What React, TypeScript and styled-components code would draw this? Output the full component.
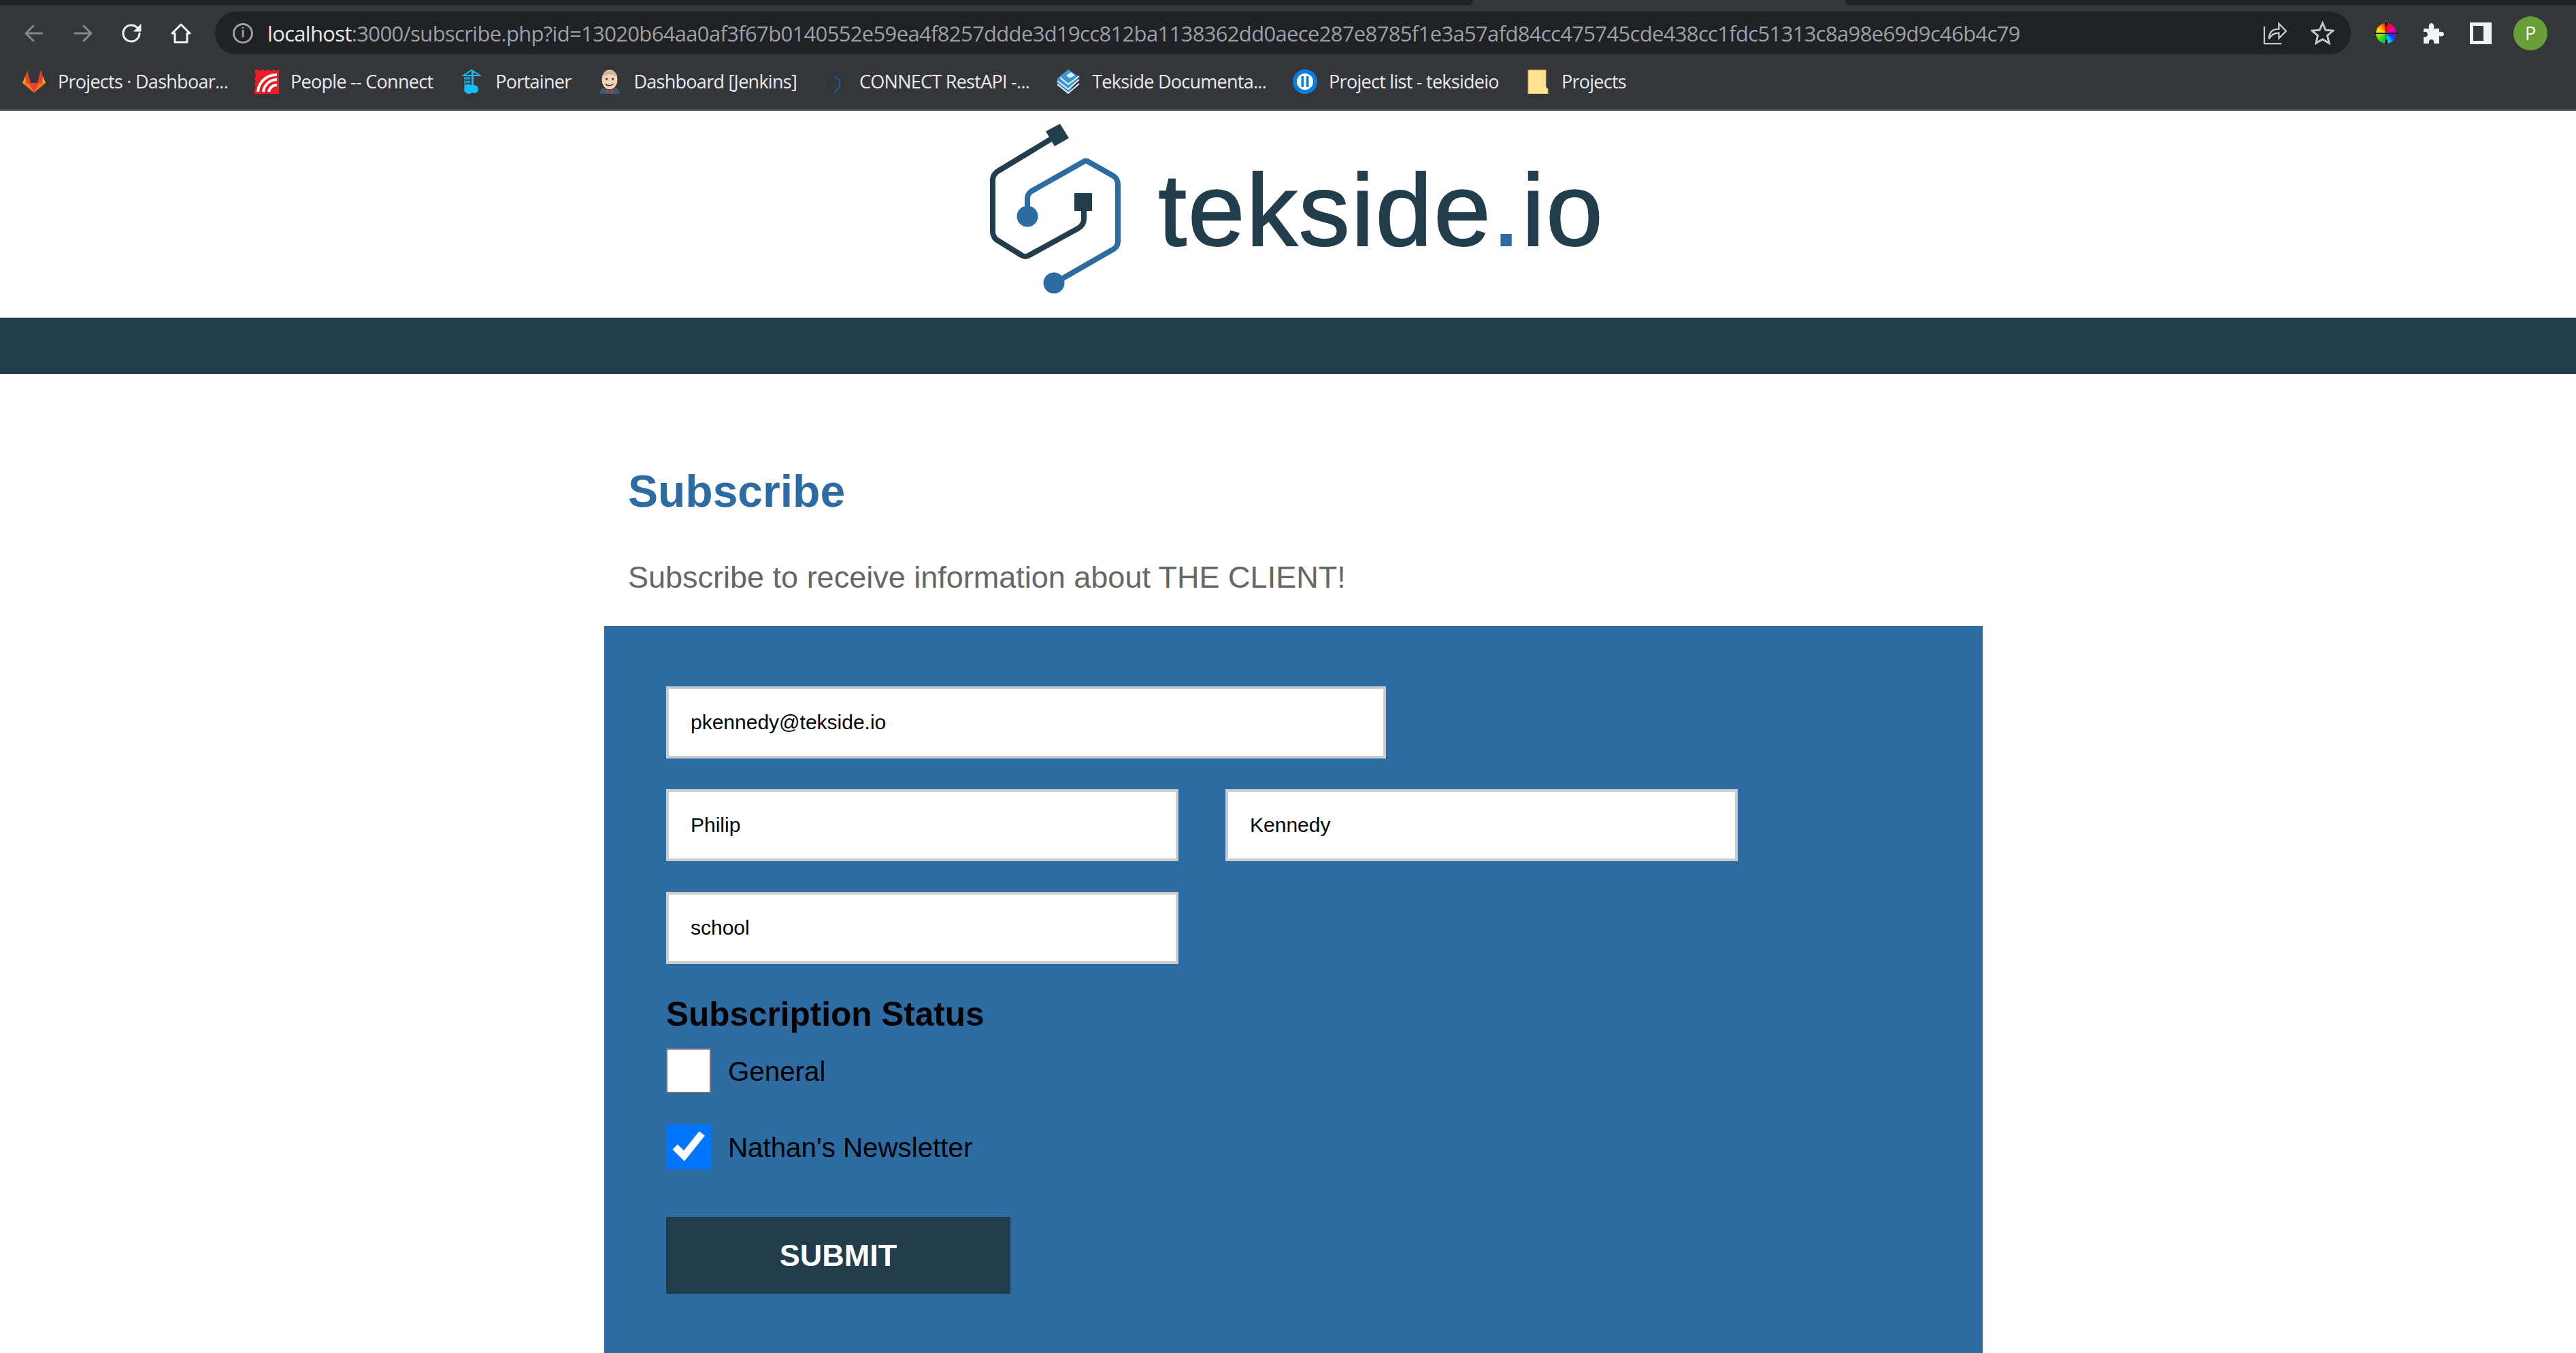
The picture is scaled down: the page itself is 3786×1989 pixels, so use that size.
import React from "react";
import styled, { createGlobalStyle } from "styled-components";

const GlobalStyle = createGlobalStyle`
  html, body, #root {
    margin: 0;
    height: 100%;
    overflow: hidden;
    background: #ffffff;
  }
  * {
    box-sizing: border-box;
  }
`;

const URL_HOST = "localhost";
const URL_REST =
  ":3000/subscribe.php?id=13020b64aa0af3f67b0140552e59ea4f8257ddde3d19cc812ba1138362dd0aece287e8785f1e3a57afd84cc475745cde438cc1fdc51313c8a98e69d9c46b4c79";

// Small browser icons, drawn on a 30x30 box
const NavIcon: React.FC<{ color: string; children: React.ReactNode }> = ({ color, children }) => (
  <IconSvg viewBox="0 0 30 30" fill="none" stroke={color} strokeWidth={3} strokeLinecap="round" strokeLinejoin="round">
    {children}
  </IconSvg>
);

const GitlabIcon = () => (
  <BookmarkSvg viewBox="0 0 36 36">
    <polygon points="18,34 1,20 5,10 13,20 23,20 31,10 35,20" fill="#fca326" />
    <polygon points="18,34 10,20 26,20" fill="#e24329" />
    <polygon points="5,10 8,1 13,20 6,20" fill="#e24329" />
    <polygon points="31,10 28,1 23,20 30,20" fill="#e24329" />
    <polygon points="18,34 1,20 10,20" fill="#fc6d26" />
    <polygon points="18,34 35,20 26,20" fill="#fc6d26" />
  </BookmarkSvg>
);

const ConnectIcon = () => (
  <BookmarkSvg viewBox="0 0 36 36">
    <path d="M20 3 L8 14 V24 L15 30" fill="none" stroke="#1c3a4d" strokeWidth={2} />
    <path d="M17 10 L24 16 V26 L16 34" fill="none" stroke="#1f5f94" strokeWidth={2} />
  </BookmarkSvg>
);

const PeopleIcon = () => (
  <BookmarkSvg viewBox="0 0 36 36">
    <path d="M0 2 L4 0 L8 2 L12 0 L16 2 L20 0 L24 2 L28 0 L32 2 L36 0 V36 H0 V30 L2 26 L0 22 L2 18 L0 14 L2 10 Z" fill="#ed1c24" />
    <path d="M5 33 A27 27 0 0 1 33 8" fill="none" stroke="#ffffff" strokeWidth={4} />
    <path d="M13 33 A20 20 0 0 1 33 15" fill="none" stroke="#ffffff" strokeWidth={4} />
    <path d="M21 33 A12 12 0 0 1 33 23" fill="none" stroke="#ffffff" strokeWidth={4} />
  </BookmarkSvg>
);

const PortainerIcon = () => (
  <BookmarkSvg viewBox="0 0 36 36">
    <path d="M6 9 L18 1 L30 9 Z" fill="none" stroke="#13bef9" strokeWidth={2} />
    <rect x="18" y="1" width="3" height="26" fill="#13bef9" />
    <rect x="7" y="11" width="9" height="4" fill="#1a8fc4" />
    <rect x="7" y="16.5" width="9" height="4" fill="#1a8fc4" />
    <rect x="7" y="22" width="9" height="4" fill="#1a8fc4" />
    <circle cx="14" cy="29" r="7" fill="#13bef9" />
    <circle cx="22" cy="29" r="6" fill="#13bef9" />
  </BookmarkSvg>
);

const JenkinsIcon = () => (
  <BookmarkSvg viewBox="0 0 36 36">
    <path d="M3 36 C4 28 9 26 18 26 C27 26 32 28 33 36 Z" fill="#3d5a6e" />
    <ellipse cx="18" cy="15" rx="12" ry="15" fill="#f0d6b7" stroke="#49302a" strokeWidth={1} />
    <path d="M7 12 C8 -1 28 -2 29 11 C23 6 13 6 7 12 Z" fill="#cdb49a" />
    <circle cx="13.5" cy="14" r="1.5" fill="#231f20" />
    <circle cx="22.5" cy="14" r="1.5" fill="#231f20" />
    <path d="M12 22 Q18 26 24 21" fill="none" stroke="#49302a" strokeWidth={1.6} />
    <path d="M13 29 L18 32 L23 29 L23 35 L18 32 L13 35 Z" fill="#d33833" />
  </BookmarkSvg>
);

const DocsIcon = () => (
  <BookmarkSvg viewBox="0 0 36 36">
    <polygon points="18,0 34,11 18,36 2,22 2,13" fill="#3d95d0" />
    <polygon points="22,4 28,9 20,13 15,9" fill="#d9edf8" />
    <path d="M2 17 L18 29 L34 15 M2 22 L18 35 L34 21 M6 12 L18 22 L34 10" fill="none" stroke="#e8f3fa" strokeWidth={1.8} />
  </BookmarkSvg>
);

const ProjectListIcon = () => (
  <BookmarkSvg viewBox="0 0 36 36">
    <circle cx="18" cy="18" r="18" fill="#0b7ee0" />
    <circle cx="18" cy="18" r="12" fill="#ffffff" />
    <rect x="12.5" y="10" width="3.6" height="16" fill="#0b7ee0" />
    <rect x="19.9" y="10" width="3.6" height="16" fill="#0b7ee0" />
  </BookmarkSvg>
);

const FolderIcon = () => (
  <BookmarkSvg viewBox="0 0 36 36">
    <path d="M4 1 H30 V26 L33 29 V36 H4 Z" fill="#fde293" stroke="#dcb65a" strokeWidth={1} />
  </BookmarkSvg>
);

const bookmarks: { label: string; icon: React.ReactNode }[] = [
  { label: "Projects · Dashboar...", icon: <GitlabIcon /> },
  { label: "People -- Connect", icon: <PeopleIcon /> },
  { label: "Portainer", icon: <PortainerIcon /> },
  { label: "Dashboard [Jenkins]", icon: <JenkinsIcon /> },
  { label: "CONNECT RestAPI -...", icon: <ConnectIcon /> },
  { label: "Tekside Documenta...", icon: <DocsIcon /> },
  { label: "Project list - teksideio", icon: <ProjectListIcon /> },
  { label: "Projects", icon: <FolderIcon /> },
];

const LogoMark = () => (
  <LogoSvg viewBox="1450 178 200 264" fill="none" strokeLinejoin="round" strokeLinecap="round">
    <polygon points="1556,182 1569,203 1548,215 1535,193" fill="#223d4b" />
    <path
      d="M1545 203 L1464 252 Q1457 257 1457 265 V340 Q1457 347 1462 352 L1499 375 Q1505 379 1511 375 L1582 336 Q1591 331 1591 322 V305"
      stroke="#223d4b"
      strokeWidth={8}
    />
    <rect x="1577" y="284" width="26" height="26" fill="#223d4b" />
    <path
      d="M1508 318 V292 Q1508 285 1514 281 L1590 238 Q1594 235 1598 238 L1635 259 Q1641 263 1641 272 V355 Q1641 362 1635 366 L1555 412"
      stroke="#2d6ca2"
      strokeWidth={8}
    />
    <circle cx="1508" cy="318" r="15.5" fill="#2d6ca2" />
    <circle cx="1547" cy="416" r="15.5" fill="#2d6ca2" />
  </LogoSvg>
);

const App: React.FC = () => {
  return (
    <Page>
      <GlobalStyle />
      <TabStrip>
        <TabGapLeft />
        <TabGapRight />
      </TabStrip>
      <Toolbar>
        <NavGroup>
          <NavIcon color="#84868a">
            <path d="M27 15 H3 M14 4 L3 15 L14 26" />
          </NavIcon>
          <NavIcon color="#84868a">
            <path d="M3 15 H27 M16 4 L27 15 L16 26" />
          </NavIcon>
          <NavIcon color="#f1f3f4">
            <path d="M26 15 A12 12 0 1 1 22 6" />
            <polygon points="28,2 28,12 18,12" fill="#f1f3f4" strokeWidth={1} />
          </NavIcon>
          <NavIcon color="#f1f3f4">
            <path d="M2 15 L15 2 L28 15 H24 V28 H6 V15 Z" />
          </NavIcon>
        </NavGroup>
        <AddressBar>
          <InfoBadge>i</InfoBadge>
          <UrlText>
            <UrlHost>{URL_HOST}</UrlHost>
            {URL_REST}
          </UrlText>
          <AddressActions>
            <IconSvg viewBox="0 0 36 36" fill="none" stroke="#c4c7c5" strokeWidth={2.4}>
              <path d="M2 8 V34 H28 M9 27 C9 17 14 12 24 12 V4 L35 15 L24 26 V18 C17 18 12 21 9 27 Z" />
            </IconSvg>
            <IconSvg viewBox="0 0 36 36" fill="none" stroke="#c4c7c5" strokeWidth={3}>
              <polygon points="18,3 22.5,13.5 34,14.5 25.2,22 28,33.5 18,27.4 8,33.5 10.8,22 2,14.5 13.5,13.5" />
            </IconSvg>
          </AddressActions>
        </AddressBar>
        <ExtensionGroup>
          <ColorWheel />
          <IconSvg viewBox="0 0 32 32" fill="#f1f3f4">
            <path d="M2 9 H10 C9 4 11 1 13.5 1 C16 1 18 4 17 9 H25 V14 C29 13 32 14 32 17 C32 20 29 21 25 20 V31 H17 C18 26 15 25 13.5 25 C12 25 9 26 10 31 H2 V21 C6 22 8 20 8 17.5 C8 15 6 13 2 14 Z" />
          </IconSvg>
          <IconSvg viewBox="0 0 32 32" fill="none">
            <rect x="2.5" y="2.5" width="27" height="27" stroke="#f1f3f4" strokeWidth={5} />
            <rect x="20" y="2" width="10" height="28" fill="#f1f3f4" />
          </IconSvg>
          <Avatar>P</Avatar>
        </ExtensionGroup>
      </Toolbar>
      <BookmarkBar>
        {bookmarks.map((b) => (
          <Bookmark key={b.label}>
            {b.icon}
            <BookmarkLabel>{b.label}</BookmarkLabel>
          </Bookmark>
        ))}
      </BookmarkBar>
      <Header>
        <LogoMark />
        <LogoText>
          tekside<LogoDot>.</LogoDot>io
        </LogoText>
      </Header>
      <Band />
      <Main>
        <Intro>
          <Title>Subscribe</Title>
          <Lead>Subscribe to receive information about THE CLIENT!</Lead>
        </Intro>
        <FormPanel>
          <FieldRow>
            <TextField $wide value="pkennedy@tekside.io" readOnly />
          </FieldRow>
          <FieldRow>
            <TextField value="Philip" readOnly />
            <TextField value="Kennedy" readOnly />
          </FieldRow>
          <FieldRow>
            <TextField value="school" readOnly />
          </FieldRow>
          <StatusTitle>Subscription Status</StatusTitle>
          <CheckRow>
            <CheckInput type="checkbox" readOnly />
            General
          </CheckRow>
          <CheckRow>
            <CheckInput type="checkbox" checked readOnly />
            Nathan's Newsletter
          </CheckRow>
          <SubmitButton type="button">SUBMIT</SubmitButton>
        </FormPanel>
      </Main>
    </Page>
  );
};

export default App;

// Styled Components
const Page = styled.div`
  height: 100%;
  display: flex;
  flex-direction: column;
  font-family: "Liberation Sans", Arial, sans-serif;
`;

const TabStrip = styled.div`
  height: 8px;
  flex: none;
  display: flex;
  justify-content: space-between;
  background: #35363a;
`;

const TabGapLeft = styled.div`
  width: 2165px;
  background: #202124;
  border-bottom-right-radius: 8px;
`;

const TabGapRight = styled.div`
  width: 1074px;
  background: #202124;
  border-bottom-left-radius: 8px;
`;

const Toolbar = styled.div`
  height: 80px;
  flex: none;
  display: flex;
  align-items: flex-start;
  padding: 9px 41px 0 35px;
  background: #35363a;
`;

const NavGroup = styled.div`
  display: flex;
  align-items: center;
  gap: 42px;
  height: 63px;
  margin-right: 35px;
  svg {
    width: 30px;
    height: 30px;
  }
`;

const IconSvg = styled.svg`
  display: block;
  flex: none;
`;

const AddressBar = styled.div`
  width: 3139px;
  height: 63px;
  display: flex;
  align-items: center;
  padding: 0 24px 0 26px;
  border-radius: 32px;
  background: #202124;
`;

const InfoBadge = styled.div`
  width: 30px;
  height: 30px;
  flex: none;
  display: flex;
  align-items: center;
  justify-content: center;
  margin-right: 21px;
  border: 3px solid #9aa0a6;
  border-radius: 50%;
  color: #9aa0a6;
  font: 700 20px "Liberation Sans", sans-serif;
`;

const UrlText = styled.div`
  flex: 1;
  white-space: nowrap;
  color: #9aa0a6;
  font: 400 31px "Open Sans", sans-serif;
  letter-spacing: -0.67px;
`;

const UrlHost = styled.span`
  color: #e8eaed;
`;

const AddressActions = styled.div`
  display: flex;
  align-items: center;
  gap: 35px;
  svg {
    width: 35px;
    height: 35px;
  }
`;

const ExtensionGroup = styled.div`
  display: flex;
  align-items: center;
  gap: 38px;
  height: 63px;
  margin-left: 37px;
  svg {
    width: 32px;
    height: 32px;
  }
`;

const ColorWheel = styled.div`
  position: relative;
  width: 30px;
  height: 30px;
  flex: none;
  border-radius: 50%;
  background: conic-gradient(#ff0000, #ff00a0 60deg, #a000c0 90deg, #0040ff 120deg, #00d0ff 160deg, #00d040 200deg, #80e000 250deg, #ffe800 290deg, #ff8000 330deg, #ff0000);

  /* picker crosshair sitting over the wheel */
  &::before {
    content: "";
    position: absolute;
    left: 13px;
    top: -3px;
    width: 4px;
    height: 36px;
    border-radius: 2px;
    background: #222;
    box-shadow: 0 0 0 1px #888;
    clip-path: polygon(0 0, 100% 0, 100% 22%, 60% 22%, 60% 78%, 100% 78%, 100% 100%, 0 100%, 0 78%, 40% 78%, 40% 22%, 0 22%);
  }
  &::after {
    content: "";
    position: absolute;
    left: -3px;
    top: 14px;
    width: 36px;
    height: 2px;
    background: #222;
  }
`;

const Avatar = styled.div`
  width: 50px;
  height: 50px;
  flex: none;
  display: flex;
  align-items: center;
  justify-content: center;
  margin-left: -6px;
  border-radius: 50%;
  background: #689f38;
  color: #ffffff;
  font: 400 27px "Open Sans", sans-serif;
`;

const BookmarkBar = styled.div`
  height: 75px;
  flex: none;
  display: flex;
  align-items: center;
  gap: 39px;
  padding: 0 0 10px 32px;
  background: #35363a;
  border-bottom: 2px solid #5f6063;
`;

const Bookmark = styled.div`
  display: flex;
  align-items: center;
  gap: 17px;
`;

const BookmarkSvg = styled.svg`
  width: 36px;
  height: 36px;
  flex: none;
  display: block;
`;

const BookmarkLabel = styled.span`
  color: #e8eaed;
  white-space: nowrap;
  font: 400 27px "Open Sans", sans-serif;
  letter-spacing: -0.73px;
`;

const Header = styled.header`
  height: 304px;
  flex: none;
  display: flex;
  align-items: flex-start;
  justify-content: center;
  gap: 50px;
  padding: 15px 0 0 24px;
  background: #ffffff;
`;

const LogoSvg = styled.svg`
  width: 200px;
  height: 264px;
  flex: none;
  display: block;
`;

const LogoText = styled.div`
  margin-top: 56px;
  color: #223d4b;
  font: 400 150px/1 "Liberation Sans", Arial, sans-serif;
  letter-spacing: 2.2px;
  -webkit-text-stroke: 2px #223d4b;
`;

const LogoDot = styled.span`
  color: #2d6ca2;
  -webkit-text-stroke: 2px #2d6ca2;
`;

const Band = styled.div`
  height: 83px;
  flex: none;
  background: #223d4b;
`;

const Main = styled.main`
  flex: 1;
  min-height: 0;
  width: 2026px;
  margin-left: 888px;
  display: flex;
  flex-direction: column;
`;

const Intro = styled.div`
  height: 370px;
  flex: none;
  padding: 139px 0 0 35px;
`;

const Title = styled.h1`
  margin: 0;
  color: #2d6ca2;
  font: 700 66px/1 "Liberation Sans", Arial, sans-serif;
`;

const Lead = styled.p`
  margin: 71px 0 0;
  color: #666666;
  font: 400 45px/1 "Liberation Sans", Arial, sans-serif;
`;

const FormPanel = styled.form`
  flex: 1;
  display: flex;
  flex-direction: column;
  align-items: flex-start;
  padding: 89px 0 0 91px;
  background: #2d6ca2;
`;

const FieldRow = styled.div`
  display: flex;
  gap: 69px;
  margin-bottom: 45px;
`;

const TextField = styled.input<{ $wide?: boolean }>`
  width: ${(props) => (props.$wide ? "1058px" : "753px")};
  height: 106px;
  padding: 0 32px;
  border: 4px solid #cccccc;
  border-radius: 0;
  background: #ffffff;
  color: #000000;
  font: 400 30px "Liberation Sans", Arial, sans-serif;
  outline: none;
`;

const StatusTitle = styled.h3`
  margin: -1px 0 0;
  color: #000000;
  font: 700 49.5px/1.2 "Liberation Sans", Arial, sans-serif;
`;

const CheckRow = styled.label`
  display: flex;
  align-items: center;
  gap: 25px;
  height: 66px;
  padding-top: 4px;
  margin-top: 21px;
  margin-bottom: 25px;
  color: #000000;
  font: 400 40.3px "Liberation Sans", Arial, sans-serif;
`;

const CheckInput = styled.input`
  width: 66px;
  height: 66px;
  margin: -4px 0 0;
  flex: none;

  &:not(:checked) {
    outline: 2px solid #767676;
    outline-offset: -2px;
    border-radius: 5px;
  }
`;

const SubmitButton = styled.button`
  width: 506px;
  height: 113px;
  margin-top: 45px;
  border: none;
  background: #223d4b;
  color: #ffffff;
  font: 700 45px "Liberation Sans", Arial, sans-serif;
`;
